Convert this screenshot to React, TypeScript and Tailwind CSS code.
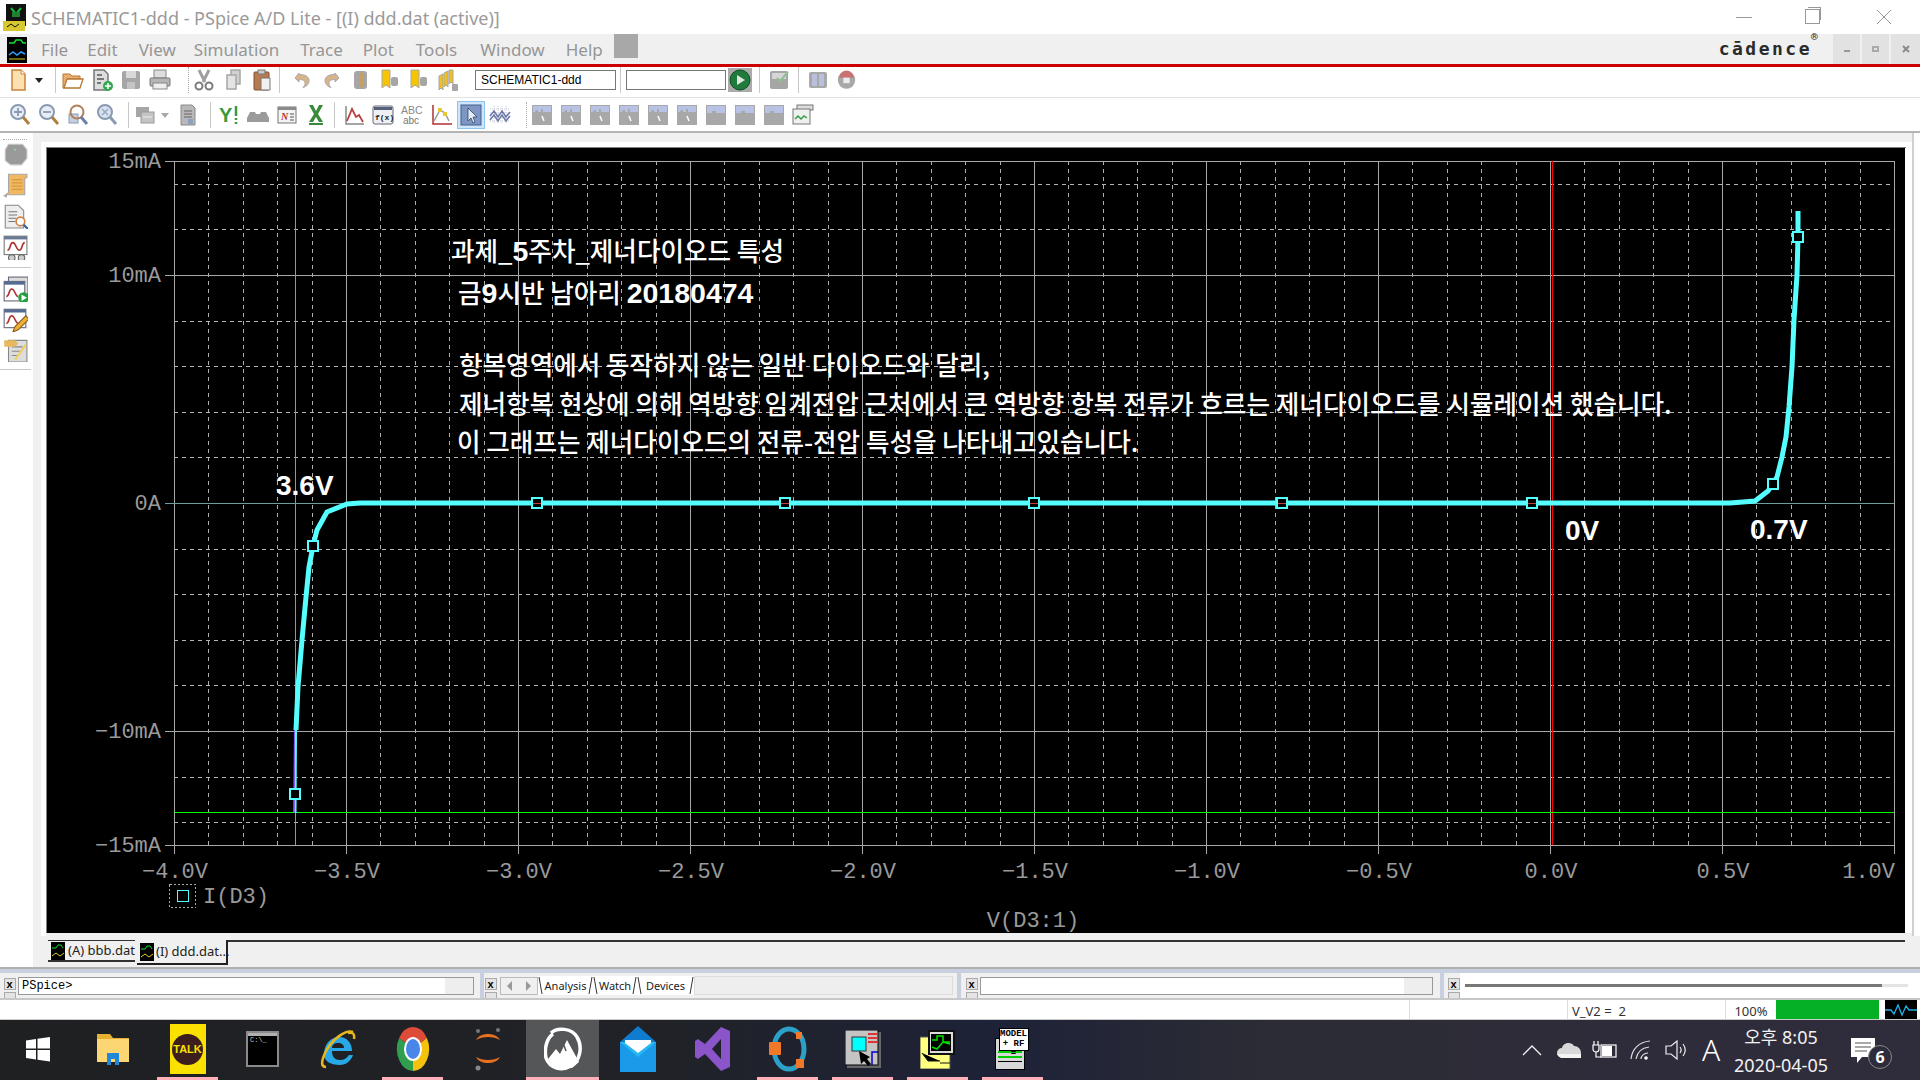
import React from "react";

const S = ({ children, w = 24, h = 24, vb = "0 0 24 24", className = "" }: { children: React.ReactNode; w?: number; h?: number; vb?: string; className?: string }) => (
  <svg width={w} height={h} viewBox={vb} className={className}>{children}</svg>
);

/* ---------- toolbar icons ---------- */
const gray = "#a6a6a6";
const dk = "#7d7d7d";
const Ic: Record<string, React.ReactNode> = {
  new: <S><path d="M6 2h9l4 4v16H6z" fill="#fce0b0" stroke="#c8823c" strokeWidth="1.5" /><path d="M15 2v4h4" fill="#fff" stroke="#c8823c" /></S>,
  drop: <S w={10} h={24} vb="0 0 10 24"><path d="M1 10h8l-4 5z" fill="#222" /></S>,
  open: <S><path d="M2 6h7l2 2h8v3H6L3 20H2z" fill="#e8b070" stroke="#b87830" /><path d="M6 11h16l-3 9H3z" fill="#fff" stroke="#b87830" strokeWidth="1.3" /></S>,
  bin: <S><path d="M4 2h10l4 4v16H4z" fill="#ddd" stroke="#777" strokeWidth="1.5" /><path d="M7 7h5M7 11h7M7 15h4" stroke="#555" strokeWidth="1.5" /><circle cx="18" cy="18" r="5" fill="#2fa84f" /><path d="M18 15v6M15 18h6" stroke="#fff" strokeWidth="1.6" /></S>,
  save: <S><rect x="3" y="3" width="18" height="18" rx="2" fill={gray} /><rect x="7" y="3" width="10" height="7" fill="#d8d8d8" /><rect x="8" y="14" width="8" height="7" fill="#c4c4c4" /></S>,
  print: <S><rect x="6" y="2" width="12" height="8" fill="#ddd" stroke="#888" /><rect x="2" y="10" width="20" height="8" rx="1" fill="#b5b5b5" stroke="#777" /><rect x="5" y="15" width="14" height="6" fill="#eee" stroke="#888" /></S>,
  cut: <S><path d="M7 2l6 12M17 2l-6 12" stroke="#a0a0a0" strokeWidth="3" /><circle cx="7" cy="18" r="3.5" fill="none" stroke={dk} strokeWidth="2" /><circle cx="17" cy="18" r="3.5" fill="none" stroke={dk} strokeWidth="2" /></S>,
  copy: <S><path d="M9 2h9v14H9z" fill="#d0d0d0" stroke={gray} strokeWidth="1.5" /><path d="M5 7h9v14H5z" fill="#e4e4e4" stroke={gray} strokeWidth="1.5" /></S>,
  paste: <S><rect x="4" y="4" width="15" height="18" rx="1" fill="#b87a50" stroke="#80502f" /><rect x="8" y="2" width="7" height="4" fill="#ccc" stroke="#777" /><path d="M11 10h9v12h-9z" fill="#f0f0f0" stroke="#777" /></S>,
  undo: <S><path d="M8 5L4 10l4 4v-2.5c4 0 6 1 6 4 0 1.500-1 3-2 4 4-1 6-4 6-7 0-4-4-6-10-6z" fill="#d8b48a" stroke="#a8a8a8" /></S>,
  redo: <S><path d="M16 5l4 5-4 4v-2.500c-4 0-6 1-6 4 0 1.500 1 3 2 4-4-1-6-4-6-7 0-4 4-6 10-6z" fill="#d8b48a" stroke="#a8a8a8" /></S>,
  book: <S><rect x="6" y="3" width="13" height="18" rx="3" fill={gray} /><rect x="12" y="5" width="4" height="14" fill="#c6a060" /></S>,
  tag1: <S><path d="M5 2h8v18l-4-3-4 3z" fill="#f6c400" stroke="#a8a8a8" /><rect x="14" y="9" width="7" height="9" rx="2" fill={gray} /></S>,
  tag3: <S><path d="M4 8l4-2v16l-2-2-2 2zM9 5l4-2v16l-2-2-2 2zM14 2h4v14l-2-2-2 2z" fill="#f0c020" stroke="#a8a8a8" /><rect x="17" y="16" width="6" height="7" rx="1" fill={gray} /></S>,
  play: <S w={24} h={24}><rect x="0" y="0" width="24" height="24" fill="#ababab" /><circle cx="12" cy="12" r="10" fill="#1f7a3c" stroke="#0f4f25" /><path d="M9 7l8 5-8 5z" fill="#dfe8df" /></S>,
  check: <S><rect x="3" y="3" width="18" height="18" rx="2" fill={gray} /><rect x="5" y="5" width="14" height="6" fill="#d6d6d6" /><path d="M10 10l3 3 8-9" stroke="#8cc090" strokeWidth="2" fill="none" /></S>,
  pause: <S><rect x="3" y="4" width="18" height="16" rx="2" fill="#a8a8a8" /><rect x="6" y="6" width="5" height="12" fill="#b8c0dc" /><rect x="13" y="6" width="5" height="12" fill="#b8c0dc" /></S>,
  stop: <S><circle cx="12" cy="12" r="11" fill="#a8a8a8" /><path d="M3 9a9 9 0 0118 0z" fill="#c97272" /><rect x="8" y="9" width="8" height="7" fill="#ececec" /></S>,
  zin: <S><circle cx="10" cy="9" r="7" fill="#e8eef8" stroke="#8a9ab0" strokeWidth="2" /><path d="M6 9h8M10 5v8" stroke="#8a9ab0" strokeWidth="1.8" /><path d="M15 14l6 7" stroke="#b08040" strokeWidth="3" /></S>,
  zout: <S><circle cx="10" cy="9" r="7" fill="#e8eef8" stroke="#8a9ab0" strokeWidth="2" /><path d="M6 9h8" stroke="#8a9ab0" strokeWidth="1.8" /><path d="M15 14l6 7" stroke="#b08040" strokeWidth="3" /></S>,
  zarea: <S><rect x="3" y="11" width="9" height="9" fill="#c8d0e0" stroke="#8a9ab0" /><circle cx="11" cy="9" r="6.500" fill="none" stroke="#b0805a" strokeWidth="2" /><path d="M15 14l6 7" stroke="#6a80a8" strokeWidth="3" /></S>,
  zall: <S><circle cx="10" cy="9" r="7" fill="#d8e2f0" stroke="#8a9ab0" strokeWidth="2" /><path d="M7 6l6 6M13 6l-6 6" stroke="#9aa8bc" strokeWidth="1.500" /><path d="M15 14l6 7" stroke="#8a9ab0" strokeWidth="3" /></S>,
  logic: <S><rect x="3" y="4" width="13" height="10" fill={gray} /><rect x="8" y="9" width="13" height="11" fill="#c4c4c4" stroke="#999" /><path d="M10 14h9" stroke="#eee" /></S>,
  drop2: <S w={10} h={24} vb="0 0 10 24"><path d="M1 10h8l-4 5z" fill="#a8a8a8" /></S>,
  sheet: <S><path d="M5 2h11l3 3v17H5z" fill="#b8b8b8" stroke="#8a8a8a" /><path d="M8 8h8M8 11h8M8 14h8" stroke="#666" /><rect x="12" y="16" width="5" height="5" fill="#8ca0c0" /></S>,
  y: <S><text x="1" y="19" className="font-['Liberation_Sans'] font-bold" fontSize="20" fill="#3b9a3b">Y</text><path d="M18 3v10M18 15v2M18 19v2" stroke="#3b9a3b" strokeWidth="2.500" /></S>,
  eye: <S><path d="M1 15l3-6h5l1 2h4l1-2h5l3 6v4H1z" fill="#9b9b9b" /></S>,
  fn: <S><rect x="3" y="4" width="18" height="16" fill="#f4f4f4" stroke="#777" /><rect x="3" y="4" width="18" height="3" fill="#8a8a8a" /><text x="6" y="17" className="font-['Liberation_Serif'] italic font-bold" fontSize="10" fill="#b03030">N</text><path d="M15 11h4M15 14h4M15 17h4" stroke="#555" /></S>,
  x: <S><path d="M5 2h4l3 6 3-6h4l-5 9 5 8h-4l-3-5-3 5H5l5-8z" fill="#3b8a3b" /><rect x="5" y="20" width="14" height="2" fill="#3b8a3b" /></S>,
  plot: <S><path d="M4 3v18h18" stroke="#888" strokeWidth="1.500" fill="none" /><path d="M5 18l5-12 4 8 3-2 4 7" stroke="#b84040" strokeWidth="1.800" fill="none" /></S>,
  fx: <S><rect x="2" y="3" width="20" height="18" rx="2" fill="#eef0f4" stroke="#667" /><rect x="3" y="4" width="18" height="3" fill="#55607a" /><text x="4" y="17" className="font-['Liberation_Mono'] font-bold" fontSize="8" fill="#222">f(x)</text></S>,
  abc: <S><text x="1" y="11" className="font-['Liberation_Sans']" fontSize="10.500" fill="#888">ABC</text><text x="3" y="21" className="font-['Liberation_Sans']" fontSize="10" fill="#777">abc</text></S>,
  mark: <S><path d="M4 2v19h19" stroke="#b03030" strokeWidth="1.500" fill="none" /><path d="M5 18l6-11 5 3 4 8" stroke="#999" strokeWidth="1.500" fill="none" /><rect x="9" y="5" width="4" height="4" fill="#e8c830" /><rect x="14" y="9" width="4" height="4" fill="#e8c830" /></S>,
  cursor: <S><rect x="2" y="2" width="20" height="20" fill="#7d96c4" stroke="#445d8c" /><path d="M9 5v13l3-3 2 5 2-1-2-5h4z" fill="#e4ecf8" stroke="#23355a" strokeWidth=".7" /></S>,
  mesh: <S><path d="M2 6h20M2 10h20M2 14h20M2 18h20M6 3v18M10 3v18M14 3v18M18 3v18" stroke="#c4c8d4" strokeDasharray="1 1" /><path d="M2 13l4-5 4 6 4-6 4 6 4-5M2 17l4-5 4 6 4-6 4 6 4-5" stroke="#6a78a8" strokeWidth="1.500" fill="none" /></S>,
  win: <S><rect x="2" y="2" width="20" height="20" fill="#a8a8a8" /><rect x="3" y="3" width="18" height="6" fill="#b8c2e4" /><path d="M3 9h2l1-2h2v2h3V6h2v3h8v2H3z" fill="#a8a8a8" /><path d="M12 13l2 5" stroke="#fff" strokeWidth="1.500" /></S>,
  win2: <S><rect x="2" y="2" width="20" height="20" fill="#a8a8a8" /><rect x="3" y="3" width="18" height="7" fill="#b8c2e4" /><path d="M3 10h5V8h4v2h9v1H3z" fill="#a8a8a8" /></S>,
  wave: <S><rect x="6" y="2" width="16" height="5" fill="#ddd" stroke="#777" /><rect x="2" y="6" width="17" height="15" fill="#eef2ee" stroke="#777" /><path d="M4 16l3-3 3 3 3-3 3 2" stroke="#3a9a4a" strokeWidth="1.500" fill="none" /></S>,
};

const Cell = ({ i, className = "w-[29px]" }: { i: string; className?: string }) => (
  <div className={`flex items-center justify-center shrink-0 ${className}`}>{Ic[i]}</div>
);
const Sep = ({ className = "" }: { className?: string }) => <div className={`w-px h-[26px] bg-[#c8c8c8] shrink-0 ${className}`} />;
const Dots = ({ className = "" }: { className?: string }) => <div className={`w-0 h-[26px] border-l border-dotted border-[#aaa] shrink-0 ${className}`} />;

/* ---------- left column icons ---------- */
const LeftIc = {
  bubble: <S w={26} h={26}><path d="M6 3h13l4 5v8l-5 6H8l-5-4V8z" fill="#9a9a9a" stroke="#c8c8c8" /><circle cx="12" cy="8" r="1" fill="#9ed09e" /></S>,
  scroll: <S w={26} h={26}><path d="M6 2h17v3l-2 1v15H4v2l-2-1 4-3z" fill="#f0b860" stroke="#a8a8a8" /><path d="M9 7h10M9 10h10M9 13h10M9 16h10" stroke="#d89840" /></S>,
  doc: <S w={26} h={26}><path d="M3 2h12l5 5v16H3z" fill="#eee" stroke="#888" /><path d="M6 8h8M6 11h8M6 14h7M6 17h6" stroke="#777" /><circle cx="17" cy="17" r="4" fill="#fff" stroke="#d08040" strokeWidth="1.500" /><path d="M20 20l4 4" stroke="#3060a0" strokeWidth="2" /></S>,
  plot: <S w={26} h={26}><rect x="2" y="2" width="21" height="17" fill="#fff" stroke="#777" /><rect x="2" y="2" width="21" height="3" fill="#6a7a94" /><path d="M5 15c3 0 2-7 5-7s3 7 6 7 2-7 5-7" stroke="#b03030" strokeWidth="1.500" fill="none" /><circle cx="9" cy="22" r="3" fill="#ccc" stroke="#666" /><circle cx="18" cy="22" r="3" fill="#ccc" stroke="#666" /></S>,
  run: <S w={26} h={26}><rect x="6" y="1" width="18" height="17" fill="#ddd" stroke="#667" /><rect x="2" y="5" width="19" height="18" fill="#fff" stroke="#667" /><rect x="2" y="5" width="19" height="3" fill="#566a92" /><path d="M4 19c3 0 2-7 5-7s3 7 6 7" stroke="#b03030" strokeWidth="1.500" fill="none" /><circle cx="20" cy="20" r="5" fill="#20a040" /><path d="M18 17l5 3-5 3z" fill="#fff" /></S>,
  edit: <S w={26} h={26}><rect x="2" y="3" width="20" height="17" fill="#fff" stroke="#667" /><rect x="2" y="3" width="20" height="3" fill="#566a92" /><path d="M4 16c3 0 2-7 5-7s3 7 6 7" stroke="#b03030" strokeWidth="1.500" fill="none" /><path d="M10 24l2-5 10-10 3 3-10 10z" fill="#f0b030" stroke="#8a5a20" /></S>,
  note: <S w={26} h={26}><path d="M6 4h17v20H6z" fill="#ddd" stroke="#888" /><path d="M9 10h10M9 14h8M9 18h6" stroke="#888" /><path d="M2 4l10 0 3 3-3 3H2z" fill="#e8b860" /><path d="M12 22L22 8" stroke="#f0d060" strokeWidth="2" /></S>,
};

/* ---------- plot ---------- */
const ys5 = [161, 275, 503, 731, 845];
const mVals = [184, 229, 321, 366, 412, 457, 549, 594, 640, 685, 777, 822];
const xMaj = Array.from({ length: 11 }, (_, i) => 174 + i * 172);
const xMin: number[] = [];
for (let i = 0; i < 10; i++) for (let j = 1; j < 5; j++) xMin.push(174 + i * 172 + j * 34.4);
const yLabels: [number, string][] = [[161, "15mA"], [275, "10mA"], [503, "0A"], [731, "−10mA"], [845, "−15mA"]];
const xLabels = ["−4.0V", "−3.5V", "−3.0V", "−2.5V", "−2.0V", "−1.5V", "−1.0V", "−0.5V", "0.0V", "0.5V"];
const curve = "296,730 298,687 302,640 306,597 309,567 313,546 317,530 327,512 347,504 360,503 1700,503 1730,503 1755,501 1768,491 1777,477 1782,457 1786,437 1789,407 1792,367 1794,320 1797,275 1798,237 1798,211";
const markers: [number, number][] = [[295, 794], [313, 546], [537, 503], [785, 503], [1034, 503], [1282, 503], [1532, 503], [1773, 484], [1798, 237]];
const tickCls = "font-['Liberation_Mono'] fill-[#9a9a9a] text-[22px]";
const noteCls = "font-['Noto_Sans_CJK_KR','Liberation_Sans',sans-serif] font-medium fill-white text-[25.6px]";
const numCls = "font-['Liberation_Sans',sans-serif] font-bold text-[28.5px]";
const labelCls = "font-['Liberation_Sans',sans-serif] font-bold fill-white text-[28px]";

const Plot = () => (
  <svg width={1858} height={785} viewBox="47 148 1858 785" className="block bg-black">
    <g shapeRendering="crispEdges">
      {xMin.map((x) => <line key={x} x1={Math.round(x) + .5} x2={Math.round(x) + .5} y1={161} y2={845} stroke="#b0b0b0" strokeDasharray="4 4" />)}
      {mVals.map((y) => <line key={y} x1={174} x2={1894} y1={y + .5} y2={y + .5} stroke="#b8b8b8" strokeDasharray="4 4" />)}
      {xMaj.map((x) => <line key={x} x1={x + .5} x2={x + .5} y1={161} y2={854} stroke="#a8a8a8" />)}
      {ys5.map((y) => <line key={y} x1={165} x2={1894} y1={y + .5} y2={y + .5} stroke={y === 503 ? "#6e9d9d" : "#a8a8a8"} />)}
      <line x1={1552.5} x2={1552.5} y1={161} y2={845} stroke="#ff0000" />
      <line x1={295.5} x2={295.5} y1={161} y2={845} stroke="#00ff00" />
      <line x1={174} x2={1894} y1={812.5} y2={812.5} stroke="#00ff00" />
    </g>
    <polyline points={curve} fill="none" stroke="#55ffff" strokeWidth="5" />
    <line x1={295} x2={295.500} y1={813} y2={730} stroke="#55ffff" strokeWidth="3" />
    <line x1={294.5} x2={294.5} y1={730} y2={813} stroke="#7a60ff" strokeWidth="1" />
    {markers.map(([x, y]) => (
      <g key={x} shapeRendering="crispEdges">
        <rect x={x - 5} y={y - 5} width={10} height={10} fill="#000" stroke="#55ffff" strokeWidth="2" />
        {y === 503 && <line x1={x - 4} x2={x + 4} y1={503.5} y2={503.5} stroke="#c04040" />}
      </g>
    ))}
    {yLabels.map(([y, t]) => <text key={y} x={161} y={y + 7} textAnchor="end" className={tickCls}>{t}</text>)}
    {xLabels.map((t, i) => <text key={t} x={175 + i * 172} y={878} textAnchor="middle" className={tickCls}>{t}</text>)}
    <text x={1895} y={878} textAnchor="end" className={tickCls}>1.0V</text>
    <rect x={169.500} y={884.500} width={26} height={23} fill="none" stroke="#aaa" strokeDasharray="2 2" shapeRendering="crispEdges" />
    <rect x={177.500} y={890.500} width={11} height={11} fill="none" stroke="#55ffff" shapeRendering="crispEdges" />
    <text x={203} y={903} className={tickCls}>I(D3)</text>
    <text x={1033} y={927} textAnchor="middle" className={tickCls}>V(D3:1)</text>

    <text x={451} y={261} className={noteCls}>과제_<tspan className={numCls}>5</tspan>주차_제너다이오드 특성</text>
    <text x={458} y={303} className={noteCls}>금<tspan className={numCls}>9</tspan>시반 남아리 <tspan className={numCls}>20180474</tspan></text>
    <text x={459} y={375} className={noteCls}>항복영역에서 동작하지 않는 일반 다이오드와 달리,</text>
    <text x={459} y={414} className={noteCls}>제너항복 현상에 의해 역방향 임계전압 근처에서 큰 역방향 항복 전류가 흐르는 제너다이오드를 시뮬레이션 했습니다.</text>
    <text x={457} y={452} className={noteCls}>이 그래프는 제너다이오드의 전류-전압 특성을 나타내고있습니다.</text>
    <text x={276} y={495} className={labelCls}>3.6V</text>
    <text x={1565} y={540} className={labelCls}>0V</text>
    <text x={1750} y={539} className={labelCls}>0.7V</text>
  </svg>
);

/* ---------- taskbar ---------- */
const Win = <S w={28} h={28} vb="0 0 28 28"><path d="M2 5.500l10-1.500v9.500H2zM13.500 3.800L26 2v11.500H13.500zM2 15h10v9.500L2 23zM13.500 15H26v11.500l-12.500-1.800z" fill="#fff" /></S>;
const Folder = <S w={34} h={36} vb="0 0 34 36"><path d="M1 3h13l3 4h16v24H1z" fill="#e8b030" /><rect x="1" y="8" width="32" height="23" fill="#fcd672" /><path d="M11 22h12v12h-4v-6h-4v6h-4z" fill="#1f88d8" /></S>;
const Talk = (
  <div className="w-[36px] h-[50px] bg-[#fae100] flex items-center justify-center">
    <div className="w-[31px] h-[31px] rounded-full bg-[#3c1e1e] flex items-center justify-center">
      <span className="font-['Liberation_Sans'] font-bold text-[11px] leading-none text-[#fae100]">TALK</span>
    </div>
  </div>
);
const Cmd = (
  <div className="w-[33px] h-[36px] bg-black border-2 border-[#8a8a8a] flex flex-col">
    <div className="h-[3px] bg-[#b0b0b0]" />
    <span className="font-['Liberation_Mono'] text-[7px] leading-[9px] text-[#ccc] pl-[2px]">C:\_</span>
  </div>
);
const IE = <S w={36} h={40} vb="0 0 36 40"><path d="M4 25c0-10 7-17 15-17s13 6 13 14H12c0 6 3 9 8 9 4 0 7-2 9-5h4c-2 6-7 10-13 10C10 36 4 32 4 25zm8-6h12c0-3-2-5-6-5s-6 2-6 5z" fill="#29a8e8" /><path d="M33 3C26 0 12 10 5 24 1 33 1 38 6 38" fill="none" stroke="#e8b820" strokeWidth="2.500" /><path d="M28 4c4-1 7 0 6 6" fill="none" stroke="#e8b820" strokeWidth="2.500" /></S>;
const Chrome = <S w={34} h={46} vb="0 0 34 46"><path d="M17 23L3.100 12A16 22 0 0 1 30.900 12Z" fill="#dd4b39" /><path d="M17 23L30.900 12A16 22 0 0 1 17 45Z" fill="#f4c20d" /><path d="M17 23L17 45A16 22 0 0 1 3.100 12Z" fill="#2f9e4f" /><ellipse cx="17" cy="23" rx="9" ry="12" fill="#fff" /><ellipse cx="17" cy="23" rx="7" ry="10" fill="#4a86e8" /></S>;
const Jup = <S w={30} h={44} vb="0 0 30 44"><path d="M3 13c4-8 20-8 24 0-6-4-18-4-24 0zM3 30c4 8 20 8 24 0-6 4-18 4-24 0z" fill="#e8701e" /><circle cx="5" cy="4" r="2" fill="#777" /><circle cx="25" cy="3" r="2" fill="#777" /><circle cx="5" cy="41" r="2.500" fill="#888" /></S>;
const Mtn = <S w={38} h={46} vb="0 0 38 46"><path d="M7 7C13 1 28 2 33 11c6 10 3 24-6 29-9 5-21 3-25-8C0 22 3 12 9 8" fill="none" stroke="#fff" strokeWidth="3.500" /><path d="M4 33l8-10 4 5 7-14 12 22-7 6H10z" fill="#fff" /><path d="M19 17l3 8" stroke="#555" strokeWidth="1.500" /></S>;
const Mail = <S w={38} h={46} vb="0 0 38 46"><path d="M19 0l18 16v30H1V16z" fill="#0f7cd0" /><path d="M1 16h36v30H1z" fill="#29b6f6" /><path d="M6 14h26v3L19 27 6 17z" fill="#fff" /><path d="M1 16l18 15 18-15v30H1z" fill="#1a9ae8" /></S>;
const VS = <S w={36} h={46} vb="0 0 36 46"><path d="M26 1l9 4v36l-9 4-16-17-7 5-3-2V15l3-2 7 5zM26 13l-9 10 9 10z" fill="#8a55c8" /></S>;
const Ring = <S w={38} h={46} vb="0 0 38 46"><ellipse cx="20" cy="23" rx="15" ry="20" fill="none" stroke="#2da0c8" strokeWidth="5" /><rect x="0" y="16" width="12" height="13" rx="1" fill="#f07828" /><rect x="27" y="6" width="6" height="7" fill="#f07828" /><rect x="27" y="33" width="8" height="9" fill="#f07828" /></S>;
const Chip = <S w={36} h={38} vb="0 0 36 38"><rect x="2" y="2" width="34" height="36" fill="#666" /><rect x="0" y="0" width="33" height="35" fill="#c4c4c4" stroke="#000" /><rect x="7" y="7" width="14" height="14" fill="#00ffff" stroke="#333" /><path d="M23 4h9M23 8h9M23 12h9" stroke="#e00" strokeWidth="1.500" /><path d="M27 35V22h6" stroke="#00c" strokeWidth="1.500" fill="none" /><path d="M14 21l2 13 3-3 4 5 3-2-4-5 3-2z" fill="#000" /></S>;
const Sch = <S w={36} h={40} vb="0 0 36 40"><rect x="0" y="8" width="30" height="32" fill="#ffff80" stroke="#555" /><path d="M2 24l6 8h12M20 34h10" stroke="#111" /><rect x="8" y="1" width="27" height="25" fill="#111" /><rect x="10" y="3" width="23" height="21" fill="#ddd" /><rect x="11" y="5" width="20" height="17" fill="#000" /><path d="M12 11h5v-4h6v6h7M12 18l5 2 6-7 7 2" stroke="#00e000" strokeWidth="1.500" fill="none" /></S>;
const Model = (
  <div className="relative w-[36px] h-[42px]">
    <div className="absolute left-0 bottom-0 w-[30px] h-[32px] bg-[#d8d8d8] border border-black flex flex-col gap-[3px] pt-[12px] px-[2px]">
      <div className="h-[2px] bg-[#00d000]" /><div className="h-[2px] bg-[#00d000]" /><div className="h-px bg-black" />
    </div>
    <div className="absolute left-[4px] top-0 w-[30px] h-[23px] bg-white border border-black font-['Liberation_Mono'] font-bold text-[9px] leading-[10px] text-black text-center">MODEL<br />+ RF =</div>
  </div>
);

const TaskCell = ({ children, line = false, active = false }: { children: React.ReactNode; line?: boolean; active?: boolean }) => (
  <div className="w-[75px] h-full flex flex-col items-center shrink-0">
    <div className={`h-full flex flex-col items-center justify-end ${active ? "w-[73px] bg-[#555658]" : "w-[61px]"}`}>
      <div className="flex-1 flex items-center justify-center pt-[1px]">{children}</div>
      <div className={`h-[3px] w-full ${line ? "bg-[#ffb0b8]" : "bg-transparent"}`} />
    </div>
  </div>
);

const Grip = ({ className = "" }: { className?: string }) => (
  <div className={`w-[13px] shrink-0 flex flex-col items-center pt-[5px] gap-[2px] ${className}`}>
    <div className="w-[12px] h-[12px] bg-[#e4e4e4] border border-[#aaa] flex items-center justify-center font-['Liberation_Sans'] font-bold text-[11px] leading-none text-black">x</div>
    <div className="w-[12px] h-[8px] bg-[#e4e4e4] border-x border-t border-[#aaa]" />
  </div>
);
const TabSlash = ({ d }: { d: string }) => <S w={5} h={19} vb="0 0 5 19" className="shrink-0"><path d={d} stroke="#333" fill="none" /></S>;

const menus: [string, string][] = [["File", "ml-[41px]"], ["Edit", "ml-[19px]"], ["View", "ml-[21px]"], ["Simulation", "ml-[18px]"], ["Trace", "ml-[21px]"], ["Plot", "ml-[20px]"], ["Tools", "ml-[22px]"], ["Window", "ml-[23px]"], ["Help", "ml-[21px]"]];

export default function App() {
  return (
    <div className="w-[1920px] h-[1080px] flex flex-col overflow-hidden bg-white font-['Noto_Sans','Liberation_Sans',sans-serif]">
      {/* title */}
      <div className="h-[34px] shrink-0 flex items-center pl-[3px]">
        <S w={26} h={28} vb="0 0 26 28"><rect x="3" y="1" width="20" height="22" fill="#111" /><path d="M8 5l5 6 5-6" stroke="#10c030" strokeWidth="2" fill="none" /><rect x="9" y="9" width="8" height="5" fill="#208030" /><rect x="0" y="18" width="22" height="10" fill="#d8c830" /><path d="M4 24l4-3 4 3 4-3" stroke="#111" fill="none" /></S>
        <span className="ml-[2px] pt-[1px] text-[18px] leading-none text-[#9a9a9a]">SCHEMATIC1-ddd - PSpice A/D Lite - [(I) ddd.dat (active)]</span>
        <div className="ml-auto flex items-center">
          <div className="w-[16px] h-px bg-[#999] mr-[53px]" />
          <div className="relative w-[15px] h-[15px] border border-[#999] mr-[56px] mt-[-2px]"><div className="absolute -top-[3px] left-[2px] w-[13px] h-[13px] border-t border-r border-[#999]" /></div>
          <S w={16} h={16} vb="0 0 16 16" className="mr-[28px]"><path d="M1 1l14 14M15 1L1 15" stroke="#999" /></S>
        </div>
      </div>
      {/* menu */}
      <div className="h-[30px] shrink-0 bg-[#f0f0f0] flex items-center relative">
        <div className="absolute left-[7px] top-[3px]">
          <S w={21} h={26} vb="0 0 21 26"><rect x="0" y="0" width="20" height="26" fill="#000" /><path d="M2 6h5l2-3h5l2 3h3" stroke="#10e030" fill="none" strokeWidth="1.500" /><path d="M2 18l4-3 4 3 4-3 4 2" stroke="#30a0ff" fill="none" strokeWidth="1.500" /><path d="M2 22h16" stroke="#e0d020" /></S>
        </div>
        {menus.map(([m, c]) => <span key={m} className={`${c} text-[17px] leading-none text-[#969696]`}>{m}</span>)}
        <div className="w-[24px] h-[24px] bg-[#a8a8a8] ml-[11px] self-start" />
        <div className="ml-auto flex h-full items-center">
          <span className="font-['DejaVu_Sans_Mono',monospace] font-bold text-[18px] leading-none tracking-[2.500px] text-[#2a2a2a] relative">cādence<sup className="text-[11px] font-normal absolute -top-[3px] -right-[8px]">®</sup></span>
          <div className="w-[27px] h-full bg-[#e2e2e2] ml-[21px] flex items-center justify-center"><div className="w-[6px] h-[2px] bg-[#999] mt-[4px]" /></div>
          <div className="w-[27px] h-full bg-[#e2e2e2] ml-[2px] flex items-center justify-center"><div className="w-[7px] h-[6px] border-2 border-[#aaa]" /></div>
          <div className="w-[29px] h-full bg-[#e2e2e2] ml-[2px] flex items-center justify-center"><S w={10} h={10} vb="0 0 10 10"><path d="M2 2l6 6M8 2L2 8" stroke="#8a8a8a" strokeWidth="2" /></S></div>
        </div>
      </div>
      <div className="h-[3px] shrink-0 bg-[#cc0000]" />
      {/* toolbar 1 */}
      <div className="h-[31px] shrink-0 flex items-center pl-[4px] pb-[4px] border-b border-[#e2e2e2]">
        <Cell i="new" className="w-[28px]" /><Cell i="drop" className="w-[14px]" />
        <Sep className="ml-[9px]" />
        <Cell i="open" className="w-[30px] ml-[2px]" /><Cell i="bin" className="w-[28px]" /><Cell i="save" /><Cell i="print" />
        <Dots className="ml-[14px]" />
        <Cell i="cut" className="w-[30px]" /><Cell i="copy" /><Cell i="paste" className="w-[27px]" />
        <Sep className="ml-[4px]" />
        <Cell i="undo" className="w-[27px] ml-[9px]" /><Cell i="redo" /><Cell i="book" /><Cell i="tag1" /><Cell i="tag1" /><Cell i="tag3" className="w-[30px]" />
        <div className="w-[141px] h-[20px] ml-[13px] border border-[#777] bg-white flex items-center pl-[5px] shrink-0">
          <span className="font-['Liberation_Sans'] text-[12px] leading-none text-black">SCHEMATIC1-ddd</span>
        </div>
        <Sep className="ml-[4px]" />
        <div className="w-[100px] h-[20px] ml-[5px] border border-[#777] bg-white shrink-0" />
        <Cell i="play" className="w-[26px] ml-[1px]" />
        <Sep className="ml-[6px]" />
        <Cell i="check" className="w-[38px]" />
        <Sep />
        <Cell i="pause" className="w-[38px]" /><Cell i="stop" className="w-[19px]" />
      </div>
      {/* toolbar 2 */}
      <div className="h-[35px] shrink-0 flex items-center pl-[5px] border-b-2 border-[#b4b4b4]">
        <Cell i="zin" /><Cell i="zout" /><Cell i="zarea" /><Cell i="zall" />
        <Sep className="ml-[7px]" />
        <Cell i="logic" className="w-[27px] ml-[2px]" /><Cell i="drop2" className="w-[14px]" /><Cell i="sheet" className="w-[32px]" />
        <Sep className="ml-[6px]" />
        <Cell i="y" className="w-[27px] ml-[5px]" /><Cell i="eye" /><Cell i="fn" /><Cell i="x" />
        <Sep className="ml-[4px]" />
        <Cell i="plot" className="w-[28px] ml-[5px]" /><Cell i="fx" /><Cell i="abc" /><Cell i="mark" />
        <div className="w-[28px] h-[28px] ml-[2px] bg-[#cfe6fa] border border-[#8ec4f0] flex items-center justify-center shrink-0">{Ic.cursor}</div>
        <Cell i="mesh" />
        <Dots className="ml-[12px]" />
        <Cell i="win" className="w-[29px]" /><Cell i="win" /><Cell i="win" /><Cell i="win" /><Cell i="win" /><Cell i="win" /><Cell i="win2" /><Cell i="win2" /><Cell i="win2" /><Cell i="wave" className="w-[30px]" />
      </div>
      {/* main */}
      <div className="flex-1 min-h-0 flex">
        <div className="w-[33px] shrink-0 flex flex-col items-center pt-[6px] pr-[3px]">
          <div className="w-[24px] border-t border-dotted border-[#aaa] mb-[1px]" />
          <div className="flex flex-col gap-[5px] items-center">
            {LeftIc.bubble}{LeftIc.scroll}{LeftIc.doc}{LeftIc.plot}
          </div>
          <div className="w-[32px] h-px bg-[#c8c8c8] mt-[7px] mb-[8px]" />
          <div className="flex flex-col gap-[4px] items-center">
            {LeftIc.run}{LeftIc.edit}{LeftIc.note}
          </div>
          <div className="w-[32px] h-px bg-[#c8c8c8] mt-[7px]" />
        </div>
        <div className="flex-1 min-w-0 bg-[#f0f0f0] flex flex-col pl-[8px] pt-[9px]">
          <div className="flex-1 min-h-0 bg-white pl-[5px] pt-[5px] flex flex-col">
            <div className="border-l border-t border-[#808080] w-[1860px]"><Plot /></div>
            <div className="flex-1 bg-[#f0f0f0]" />
          </div>
        </div>
        <div className="w-[8px] shrink-0 bg-white border-l-2 border-[#d0d0d0]" />
      </div>
      {/* MDI tabs */}
      <div className="h-[33px] shrink-0 flex bg-[#f0f0f0] relative border-b-2 border-[#b0b0b0]">
        <div className="w-[33px] bg-white shrink-0" />
        <div className="flex-1 flex items-start pt-[4px]">
          <div className="ml-[15px] w-[87px] h-[22px] flex items-center gap-[3px] border-b-2 border-t border-[#333] pl-[3px] shrink-0">
            <S w={14} h={18} vb="0 0 14 18" className="shrink-0"><rect width="14" height="18" fill="#000" /><path d="M1 6h4l2-3h3l2 3" stroke="#10e030" fill="none" /><path d="M1 14l4-3 4 3 4-3" stroke="#e0d020" fill="none" /></S>
            <span className="font-['Noto_Sans'] text-[13px] leading-none text-[#222] whitespace-nowrap">(A) bbb.dat</span>
          </div>
          <div className="ml-[2px] w-[91px] h-[25px] flex items-center gap-[2px] bg-[#f0f0f0] border-r-2 border-b-2 border-[#222] pl-[3px] shrink-0">
            <S w={14} h={18} vb="0 0 14 18" className="shrink-0"><rect width="14" height="18" fill="#000" /><path d="M1 6h4l2-3h3l2 3" stroke="#10e030" fill="none" /><path d="M1 14l4-3 4 3 4-3" stroke="#e0d020" fill="none" /></S>
            <span className="font-['Noto_Sans'] text-[13px] leading-none text-[#222] whitespace-nowrap">(I) ddd.dat...</span>
          </div>
          <div className="flex-1 border-t-2 border-[#333] mr-[15px]" />
        </div>
      </div>
      <div className="h-[4px] shrink-0 bg-[#c8d0e0]" />
      {/* command panes */}
      <div className="h-[27px] shrink-0 flex bg-[#f0f0f0] border-b-2 border-[#c8c8c8]">
        <Grip className="ml-[3px]" />
        <div className="w-[456px] h-[18px] mt-[4px] ml-[2px] bg-white border border-[#999] flex items-center pl-[3px] shrink-0">
          <span className="font-['Liberation_Mono'] text-[12px] leading-none text-black flex-1">PSpice&gt;</span>
          <div className="w-[28px] h-full bg-[#eeeeee]" />
        </div>
        <div className="w-[4px] ml-[6px] shrink-0 bg-[#c8d0e0]" />
        <Grip />
        <div className="w-[38px] h-[18px] mt-[4px] ml-[3px] flex items-center justify-around bg-[#f0f0f0] border border-[#bbb] shrink-0">
          <S w={8} h={12} vb="0 0 8 12"><path d="M6 1L1 6l5 5z" fill="#999" /></S>
          <S w={8} h={12} vb="0 0 8 12"><path d="M2 1l5 5-5 5z" fill="#999" /></S>
        </div>
        <div className="w-[156px] flex items-center mt-[3px] h-[19px] bg-white shrink-0 font-['Noto_Sans'] text-[11px] leading-none text-[#222]">
          <TabSlash d="M1 1l3 17" />
          <span className="w-[45px] text-center">Analysis</span>
          <TabSlash d="M1 18l3-17" />
          <TabSlash d="M1 1l3 17" />
          <span className="w-[34px] text-center">Watch</span>
          <TabSlash d="M1 18l3-17" />
          <TabSlash d="M1 1l3 17" />
          <span className="w-[47px] text-center">Devices</span>
          <TabSlash d="M1 18l3-17" />
        </div>
        <div className="w-[259px] h-[19px] mt-[3px] bg-[#eeeeee] border border-[#dddddd] shrink-0" />
        <div className="w-[4px] ml-[4px] shrink-0 bg-[#c8d0e0]" />
        <Grip className="ml-[4px]" />
        <div className="w-[453px] h-[18px] mt-[4px] ml-[2px] bg-white border border-[#999] flex justify-end shrink-0">
          <div className="w-[28px] h-full bg-[#eeeeee]" />
        </div>
        <div className="w-[4px] ml-[7px] shrink-0 bg-[#c8d0e0]" />
        <Grip className="ml-[3px]" />
        <div className="flex-1 bg-white flex items-center pl-[5px] pr-[12px]">
          <div className="w-[417px] h-[3px] bg-[#777]" />
          <div className="flex-1 h-[3px] bg-[#e4e4e4]" />
        </div>
      </div>
      {/* status */}
      <div className="h-[20px] shrink-0 bg-white flex items-stretch border-b border-[#ccc]">
        <div className="w-[1410px] border-r border-[#ddd] shrink-0" />
        <div className="w-[158px] border-r border-[#ddd] shrink-0" />
        <div className="w-[158px] border-r border-[#ddd] shrink-0 flex items-center pl-[4px] pt-[3px]">
          <span className="font-['Noto_Sans'] text-[13px] leading-none text-[#333] whitespace-pre">V_V2 =  2</span>
        </div>
        <div className="w-[50px] shrink-0 flex items-center justify-center pt-[3px]">
          <span className="font-['Noto_Sans'] text-[13px] leading-none text-[#333]">100%</span>
        </div>
        <div className="w-[103px] bg-[#06b025] shrink-0" />
        <div className="w-[32px] ml-[6px] bg-black shrink-0 flex items-center">
          <S w={32} h={19} vb="0 0 32 19"><path d="M0 10h6l3 4 4-9 4 10 4-9 3 4h8" stroke="#20b0e8" strokeWidth="1.300" fill="none" /></S>
        </div>
      </div>
      {/* taskbar */}
      <div className="h-[60px] shrink-0 flex items-stretch bg-[linear-gradient(90deg,#1f2022_0%,#202228_35%,#1e2238_52%,#2b2c34_66%,#2e2c3a_85%,#2f2d3b_100%)]">
        <TaskCell>{Win}</TaskCell>
        <TaskCell>{Folder}</TaskCell>
        <TaskCell line>{Talk}</TaskCell>
        <TaskCell>{Cmd}</TaskCell>
        <TaskCell>{IE}</TaskCell>
        <TaskCell line>{Chrome}</TaskCell>
        <TaskCell>{Jup}</TaskCell>
        <TaskCell line active>{Mtn}</TaskCell>
        <TaskCell>{Mail}</TaskCell>
        <TaskCell>{VS}</TaskCell>
        <TaskCell line>{Ring}</TaskCell>
        <TaskCell line>{Chip}</TaskCell>
        <TaskCell line>{Sch}</TaskCell>
        <TaskCell line>{Model}</TaskCell>
        <div className="flex-1" />
        <div className="flex items-center h-full text-white shrink-0">
          <div className="w-[30px] flex justify-center"><S w={20} h={12} vb="0 0 20 12"><path d="M1 11l9-9 9 9" stroke="#eee" strokeWidth="1.400" fill="none" /></S></div>
          <div className="w-[36px] flex justify-center ml-[4px]"><S w={26} h={20} vb="0 0 26 20"><path d="M6 18a5 5 0 010-10c1-5 9-7 12-2 4 0 7 3 7 7s-2 5-5 5z" fill="#d8d8d8" /><path d="M1 14h24v4H5z" fill="#f4f4f4" /></S></div>
          <div className="w-[36px] flex justify-center"><S w={26} h={20} vb="0 0 26 20"><path d="M2 1v4M6 1v4M1 5h6v4a3 3 0 01-6 0zM4 12v5h5" stroke="#fff" strokeWidth="1.200" fill="none" /><rect x="9" y="5" width="15" height="12" fill="none" stroke="#fff" strokeWidth="1.200" /><rect x="10" y="6" width="10" height="10" fill="#fff" /></S></div>
          <div className="w-[36px] flex justify-center"><S w={24} h={22} vb="0 0 24 22"><path d="M2 20C3 10 10 3 21 2M7 20c1-6 5-11 13-12M12 20c0-3 3-6 7-6" stroke="#ddd" strokeWidth="1.200" fill="none" /><circle cx="17" cy="19" r="1.800" fill="#fff" /></S></div>
          <div className="w-[34px] flex justify-center"><S w={24} h={22} vb="0 0 24 22"><path d="M2 7h5l6-5v18l-6-5H2z" fill="none" stroke="#eee" strokeWidth="1.200" /><path d="M16 8c1.500 2 1.500 4 0 6M19 5c3 4 3 8 0 12" stroke="#eee" strokeWidth="1.200" fill="none" /></S></div>
          <div className="w-[36px] text-center font-['Noto_Sans'] text-[30px] leading-none font-light">A</div>
          <div className="w-[104px] flex flex-col items-center gap-[9px] pt-[2px] font-['Noto_Sans','Noto_Sans_CJK_KR',sans-serif] text-[18px] leading-[19px] text-[#f2f2f2]">
            <span>오후 8:05</span>
            <span>2020-04-05</span>
          </div>
          <div className="w-[68px] flex justify-center relative">
            <S w={26} h={27} vb="0 0 26 27" className="mr-[8px]"><path d="M1 1h24v19H12l-5 6v-6H1z" fill="#fff" /><path d="M5 6h16M5 10h16M5 14h12" stroke="#555" strokeWidth="1.200" /></S>
            <div className="absolute left-[35px] top-[8px] w-[24px] h-[24px] rounded-full border border-[#888] bg-[#2e2c3a] flex items-center justify-center font-['Noto_Sans'] font-bold text-[16px] leading-none">6</div>
          </div>
          <div className="w-[19px]" />
        </div>
      </div>
    </div>
  );
}
